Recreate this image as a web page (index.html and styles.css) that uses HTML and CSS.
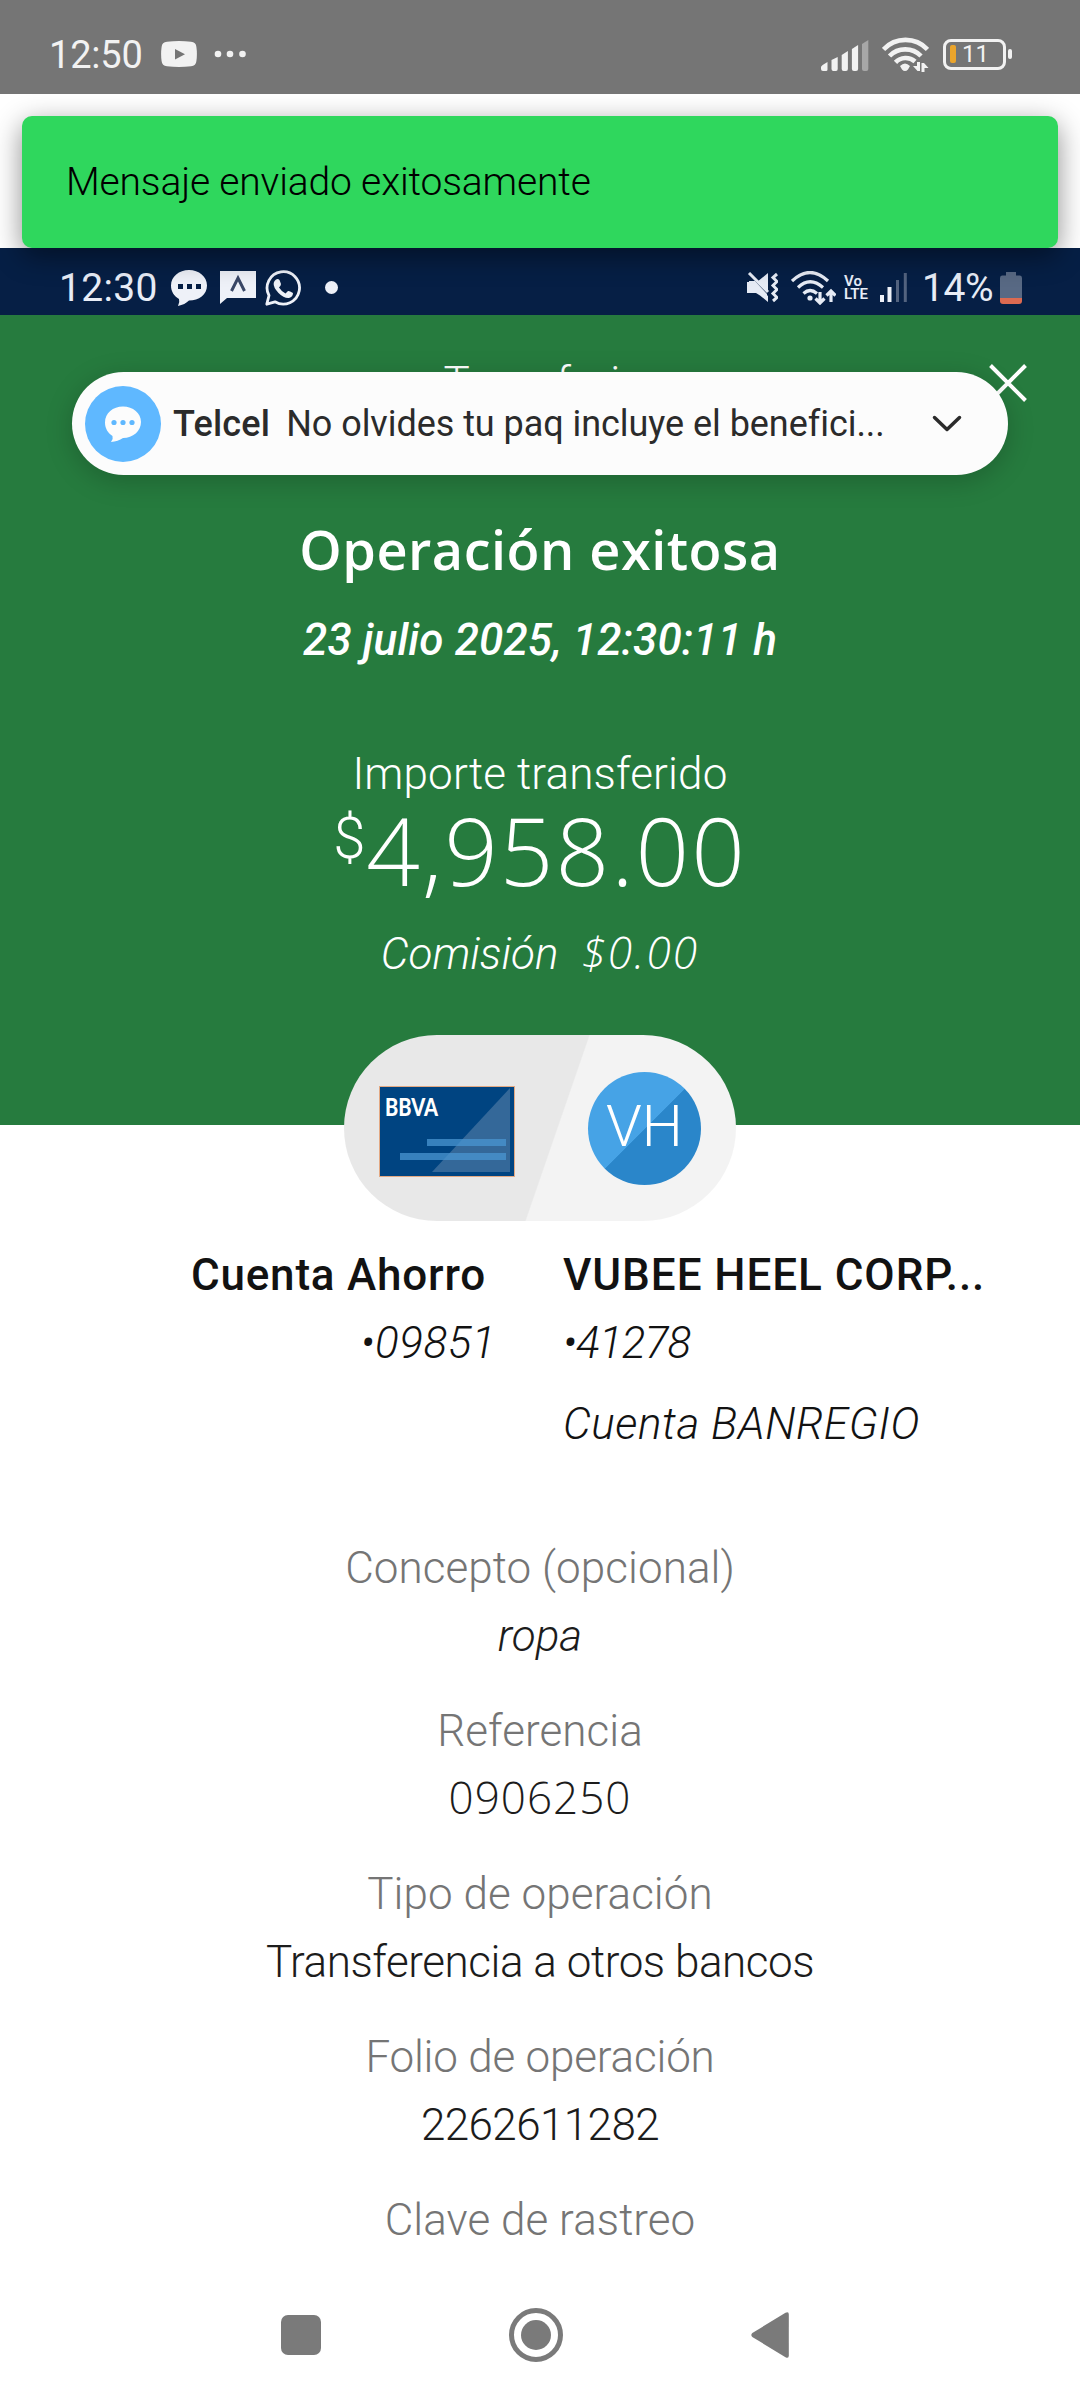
FILE: index.html
```html
<!DOCTYPE html>
<html lang="es">
<head>
<meta charset="utf-8">
<title>Operación exitosa</title>
<link rel="stylesheet" href="styles.css">
</head>
<body>
<div class="screen">
  <header class="statusbar">
    <span class="clock">12:50</span>
    <svg class="yt" width="36" height="26" viewBox="0 0 36 26"><path fill="#f2f2f2" fill-rule="evenodd" d="M6 .8Q18-.6 30 .8Q35 1 35.400 6Q36.400 13 35.400 20Q35 25 30 25.200Q18 26.600 6 25.200Q1 25 .6 20Q-.4 13 .6 6Q1 1 6 .8ZM14 8V18.500L24 13.200Z"/></svg>
    <svg class="more" width="32" height="8" viewBox="0 0 32 8" fill="#f2f2f2"><circle cx="4" cy="4" r="3.300"/><circle cx="16" cy="4" r="3.300"/><circle cx="28.500" cy="4" r="3.300"/></svg>
    <svg class="signal" width="48" height="31" viewBox="0 0 48 31" fill="#f2f2f2"><path d="M0 27Q0 25.500 6.500 22V29.500Q6.500 31 5 31H2Q0 31 0 29ZM10.500 20L16.700 17V29Q16.700 31 15 31H12.500Q10.500 31 10.500 29ZM20.700 15L26.900 11V29Q26.900 31 25 31H22.700Q20.700 31 20.700 29ZM30.900 9L37.100 5V29Q37.100 31 35 31H32.900Q30.900 31 30.900 29Z"/><path opacity=".4" d="M41 4L47.300 0V29Q47.300 31 45.300 31H43Q41 31 41 29Z"/></svg>
    <svg class="wifi" width="47" height="36" viewBox="0 0 47 36"><g fill="none" stroke="#f2f2f2" stroke-width="4.600"><path d="M1.500 13.500A30 30 0 0 1 45.500 13.500M7.500 20A22 22 0 0 1 39 20M13.500 26.300A14 14 0 0 1 33 25.500"/></g><path fill="#f2f2f2" d="M18 30Q23 25 28 30L26 33.500Q23 36.500 20 33.500ZM35 26h3v9h-2.500l-4.500-5h4zM39.500 36v-9h2.500l4.500 5h-4v4z"/></svg>
    <span class="battery"><span class="battery-level"></span>11</span>
    <span class="battery-tip"></span>
  </header>

  <div class="toast-area"><div class="toast">Mensaje enviado exitosamente</div></div>

  <main>
    <div class="inner-status">
      <span class="clock2">12:30</span>
      <svg width="36" height="36" viewBox="0 0 36 36"><path fill="#eef1f8" d="M18 0C28 0 36 6.500 36 15.500S28 30.500 18 30.500Q14 34.500 7 36Q9 32 8 29C3 26 0 21.500 0 15.500C0 6.500 8 0 18 0Z"/><path fill="#061f45" d="M7 14h5v5H7zM16 14h5v5h-5zM25 14h5v5h-5z"/></svg>
      <svg class="flag" width="36" height="33" viewBox="0 0 36 33"><path fill="#eef1f8" d="M0 0H36V27H7L0 33Z"/><path fill="none" stroke="#394766" stroke-width="3" d="M11.500 20L18 7L24.500 20"/></svg>
      <svg class="wa" width="36" height="36" viewBox="0 0 36 36"><path fill="none" stroke="#eef1f8" stroke-width="2.800" stroke-linejoin="round" d="M1.800 34.200L4 25.500A16.200 16.200 0 1 1 10 31.800Z"/><path fill="#eef1f8" d="M11 9.500Q13 8.500 14.500 10L16 14Q16 15.500 14 17.500Q16.500 21.500 20.500 23.500L23 21Q24 20.500 28 23Q28 27 24 28Q19 28.500 13.500 23Q8 17 8.700 13Q9.200 10.500 11 9.500Z"/></svg>
      <span class="dot"></span>
      <svg class="mute" width="31" height="31" viewBox="0 0 31 31"><path fill="#e6ebf5" d="M0 10H5L21 24V30L10 21H0ZM10 10L21 1V19ZM2 9H8L20 22V28L9 21H2Z"/><path fill="none" stroke="#e6ebf5" stroke-width="3" d="M2 1L21 20M30 2l-4 3.500 4 4-4 4 4 4-4 4 4 4-4 3.500"/></svg>
      <svg class="wifi2" width="45" height="34" viewBox="0 0 45 34"><g fill="none" stroke="#e6ebf5" stroke-width="3.200"><path d="M1 10Q19-7 37 10M7 16.500Q19 5 32 16.500M12.500 22.500Q19 16.500 26 22.500"/><path d="M29 21V31M24.500 27.500L29 32L33.500 27.500M40 31V21M35.500 24.500L40 20L44.500 24.500"/></g><circle cx="19" cy="27" r="2.600" fill="#e6ebf5"/></svg>
      <span class="volte"><span>Vo</span><span>LTE</span></span>
      <svg class="signal2" width="27" height="31" viewBox="0 0 27 31"><path fill="#eef1f8" d="M0 23h4v7H0zM7.500 15h4v15h-4z"/><path fill="#53637f" d="M16 8h3v22h-3zM23.800 1h3v29h-3z"/></svg>
      <span class="percent">14%</span>
      <svg class="batt2" width="22" height="32" viewBox="0 0 22 32"><path fill="#586984" d="M6 0H16V3.500H20Q22 3.500 22 6V26H0V6Q0 3.500 2 3.500H6Z"/><path fill="#dc6a51" d="M0 26H22V29Q22 32 19 32H3Q0 32 0 29Z"/></svg>
    </div>

    <section class="hero">
      <div class="hero-bar">
        <span class="hero-title">Transferir</span>
        <svg class="close" width="38" height="38" viewBox="0 0 38 38"><path stroke="#fff" stroke-width="4" d="M1.500 1.500L36.500 36.500M36.500 1.500L1.500 36.500"/></svg>
      </div>
      <div class="notice">
        <svg width="76" height="76" viewBox="0 0 76 76"><circle cx="38" cy="38" r="38" fill="#5fb8ff"/><path fill="#fcfcfc" d="M38 20.500C48 20.500 56 27 56 36S48 52 38 52Q33 55.500 26 56Q28.500 53 27.500 50C23 47 20 42.500 20 36.500C20 27 28 20.500 38 20.500Z"/><g fill="#5fb8ff"><circle cx="29" cy="36.500" r="2.600"/><circle cx="38" cy="36.500" r="2.600"/><circle cx="47" cy="36.500" r="2.600"/></g></svg>
        <strong>Telcel</strong><span class="notice-text">No olvides tu paq incluye el benefici...</span>
        <svg class="chev" width="30" height="18" viewBox="0 0 30 18"><path fill="none" stroke="#2b2b2b" stroke-width="3.500" stroke-linecap="round" stroke-linejoin="round" d="M2.500 2.500L15 14.500L27.500 2.500"/></svg>
      </div>
      <h1>Operación exitosa</h1>
      <p class="date">23 julio 2025, 12:30:11 h</p>
      <p class="amount-label">Importe transferido</p>
      <p class="amount"><span class="currency">$</span><span>4,958.00</span></p>
      <p class="fee"><span>Comisión</span><span class="fee-value">$0.00</span></p>
      <div class="route">
        <svg class="card" width="136" height="91" viewBox="0 0 136 91"><rect x=".5" y=".5" width="135" height="90" fill="#004481" stroke="#e3a983"/><path fill="#346899" d="M131 2V86H53Z"/><path fill="#4a96d2" opacity=".75" d="M48 53H127V60H48ZM21 67H127V74H21Z"/><text class="brand" x="6" y="30" textLength="53" lengthAdjust="spacingAndGlyphs">BBVA</text></svg>
        <span class="avatar">VH</span>
      </div>
    </section>

    <section class="accounts">
      <div class="from"><b>Cuenta Ahorro</b><i class="number">•09851</i></div>
      <div class="to"><b>VUBEE HEEL CORP...</b><i class="number">•41278</i><i class="bank">Cuenta BANREGIO</i></div>
    </section>

    <dl class="details">
      <dt>Concepto (opcional)</dt><dd><i>ropa</i></dd>
      <dt>Referencia</dt><dd class="reference">0906250</dd>
      <dt>Tipo de operación</dt><dd class="type">Transferencia a otros bancos</dd>
      <dt class="folio-label">Folio de operación</dt><dd class="folio">2262611282</dd>
      <dt>Clave de rastreo</dt>
    </dl>
  </main>

  <nav class="navbar">
    <svg width="40" height="40" viewBox="0 0 40 40"><rect width="40" height="40" rx="7" fill="#7a7a7a"/></svg>
    <svg width="54" height="54" viewBox="0 0 54 54"><circle cx="27" cy="27" r="24.500" fill="none" stroke="#7a7a7a" stroke-width="5"/><circle cx="27" cy="27" r="15" fill="#7a7a7a"/></svg>
    <svg width="38" height="46" viewBox="0 0 38 46"><path fill="#7a7a7a" d="M34.500.8Q37.800-.8 37.800 2.500V43.500Q37.800 46.800 34.500 45.200L1.300 25Q-.7 23 1.300 21Z"/></svg>
  </nav>
</div>
</body>
</html>
```
FILE: styles.css
```css
* { box-sizing: border-box; }
body { margin: 0; background: #fff; font-family: Roboto, "Liberation Sans", sans-serif; }
h1, p, dl, dd { margin: 0; }
svg { display: block; flex: none; }
.screen { width: 1080px; height: 2400px; overflow: hidden; display: flex; flex-direction: column; }

.statusbar { position: relative; z-index: 3; flex: none; height: 94px; background: #757575; color: #f2f2f2; display: flex; align-items: center; padding: 14px 68px 0 49px; }
.clock { width: 112px; padding-top: 2px; font-size: 38px; font-weight: 450; letter-spacing: -.2px; }
.more { margin-left: 17px; }
.signal { margin: 3px 13px 0 auto; }
.wifi { margin-right: 14px; }
.battery { display: flex; align-items: center; width: 63px; height: 31px; border: 3px solid #f2f2f2; border-radius: 8px; padding-left: 4px; font-size: 24px; }
.battery-level { width: 6px; height: 18px; margin-right: 6px; border-radius: 2px; background: #eba52c; }
.battery-tip { width: 4px; height: 10px; margin-left: 2px; border-radius: 2px; background: #f2f2f2; }

.toast-area { position: relative; z-index: 2; flex: none; height: 154px; padding: 22px 22px 0; }
.toast { height: 132px; padding-left: 44px; border-radius: 10px; background: #2fd75d; color: #000; font-size: 39px; font-weight: 300; letter-spacing: -.16px; line-height: 132px; box-shadow: 0 8px 28px rgba(0, 0, 0, .45); }

main { flex: none; }
.inner-status { height: 67px; padding: 12px 58px 0 59px; background: #061f45; color: #e8edf7; display: flex; align-items: center; }
.clock2 { width: 112px; font-size: 39px; letter-spacing: .3px; }
.flag { margin-left: 13px; }
.wa { margin-left: 9px; }
.dot { width: 13px; height: 13px; margin-left: 24px; border-radius: 50%; background: #eef1f8; }
.mute { margin-left: auto; }
.wifi2 { margin-left: 13px; }
.volte { display: flex; flex-direction: column; width: 26px; margin: 0 10px 0 8px; font-size: 15px; font-weight: 600; line-height: 13px; }
.percent { width: 78px; margin-left: 15px; font-size: 39px; letter-spacing: -.4px; }

.hero { position: relative; height: 810px; background: #267b3e; color: #fff; text-align: center; font-size: 44px; font-weight: 300; line-height: 60px; }
.hero-bar { display: flex; justify-content: center; padding-top: 38px; height: 196px; }
.hero-title { letter-spacing: .8px; }
.close { position: absolute; left: 989px; top: 49px; }
.notice { position: absolute; left: 72px; top: 57px; width: 936px; height: 103px; padding: 0 46px 0 13px; display: flex; align-items: center; border-radius: 52px; background: #fcfcfc; color: #2b2b2b; font-size: 36px; font-weight: 400; box-shadow: 0 6px 28px rgba(0, 0, 0, .2); }
.notice strong { margin-left: 12px; font-weight: 500; letter-spacing: .2px; }
.notice-text { margin-left: 16px; letter-spacing: -.05px; }
.chev { margin-left: auto; }
h1 { height: 80px; font-family: "Open Sans", sans-serif; font-size: 54px; font-weight: 600; letter-spacing: .5px; line-height: 76px; }
.date { margin-top: 19px; font-style: italic; font-weight: 500; letter-spacing: .12px; }
.amount-label { margin-top: 74px; letter-spacing: .15px; }
.amount { display: flex; justify-content: center; margin-top: 4px; height: 90px; font-family: "Open Sans", sans-serif; font-size: 94px; letter-spacing: 2px; line-height: 84px; }
.currency { font-family: Roboto, sans-serif; font-size: 58px; line-height: 60px; letter-spacing: 1px; }
.fee { display: flex; justify-content: center; gap: 23px; margin-top: 26px; font-style: italic; }
.fee-value { font-family: "Open Sans", sans-serif; letter-spacing: 2.2px; line-height: 56px; }
.route { position: absolute; left: 344px; top: 720px; width: 392px; height: 186px; padding: 1px 35px 0 35px; display: flex; align-items: center; justify-content: space-between; border-radius: 93px; background: linear-gradient(109deg, #e8e8e8 53.700%, #f3f3f3 54%); }
.card { margin-top: 5px; }
.brand { fill: #fff; font-family: Lato, sans-serif; font-size: 25px; font-weight: 900; }
.avatar { width: 113px; height: 113px; border-radius: 50%; background: linear-gradient(135deg, #46a3e6 50%, #2a86ca 50.500%); font-size: 58px; font-weight: 350; line-height: 109px; }

.accounts { display: grid; grid-template-columns: 496px 1fr; column-gap: 67px; padding-top: 116px; height: 333px; font-size: 44px; line-height: 68px; color: #121212; }
.from, .to { display: flex; flex-direction: column; align-items: flex-start; }
.from { align-items: flex-end; }
.accounts b { font-weight: 500; letter-spacing: .95px; }
.from b { margin-right: 10px; }
.accounts .from b { letter-spacing: .8px; }
.accounts i { font-weight: 300; letter-spacing: .6px; }
.accounts .to .number { letter-spacing: -.8px; }
.accounts .from .number { letter-spacing: .5px; }
.bank { margin-top: 13px; }

.details { padding-top: 76px; height: 810px; text-align: center; font-size: 44px; font-weight: 350; line-height: 68px; color: #1c1c1c; }
.details dt { color: #757575; letter-spacing: .05px; }
.details dd { margin-bottom: 27px; }
.details .reference { height: 68px; font-family: "Open Sans", sans-serif; font-weight: 350; letter-spacing: 1px; line-height: 65px; }
.details .type { letter-spacing: -.45px; }
.details .folio-label { letter-spacing: -.2px; }
.details .folio { letter-spacing: -.6px; }

.navbar { flex: none; display: flex; align-items: center; height: 134px; padding-left: 281px; }
.navbar svg + svg { margin-left: 188px; }
```
